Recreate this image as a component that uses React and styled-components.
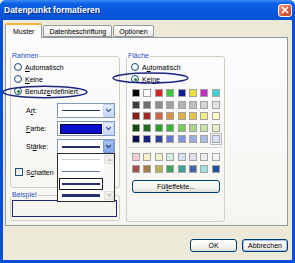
import React from 'react';
import styled, { createGlobalStyle } from 'styled-components';

const Global = createGlobalStyle`
  html, body { margin: 0; padding: 0; background: #ffffff; }
  body { font-family: "Liberation Sans", Arial, sans-serif; font-size: 7px; color: #000; }
`;

const Window = styled.div`
  position: relative;
  width: 295px;
  height: 263px;
  box-sizing: border-box;
  background: #0A4FD4;
  border-radius: 6px 6px 0 0;
  display: flex;
  flex-direction: column;
  overflow: hidden;
`;

const TitleBar = styled.div`
  height: 20px;
  flex: none;
  display: flex;
  align-items: center;
  padding: 0 3px 0 4px;
  background: linear-gradient(180deg, #3D8DF5 0%, #0C60E4 18%, #0656DC 60%, #0A52D2 100%);
`;

const Title = styled.div`
  flex: 1;
  color: #fff;
  font-weight: bold;
  font-size: 8.5px;
  text-shadow: 1px 1px 0 #0A2A80;
`;

const CloseBtn = styled.div`
  width: 14px;
  height: 13px;
  box-sizing: border-box;
  border: 1px solid #fff;
  border-radius: 3px;
  background: linear-gradient(135deg, #EE9A7E 0%, #DC5C3C 55%, #C8482C 100%);
  display: flex;
  align-items: center;
  justify-content: center;
`;

const Body = styled.div`
  flex: 1;
  margin: 0 3px 3px;
  background: #ECE9D8;
  padding: 3px 4px 0 2px;
  display: flex;
  flex-direction: column;
`;

const TabStrip = styled.div`
  display: flex;
  align-items: flex-end;
  height: 15px;
  margin-bottom: -1px;
  position: relative;
  z-index: 1;
`;

const Tab = styled.div`
  box-sizing: border-box;
  height: ${p => (p.$active ? 15 : 12)}px;
  margin-bottom: ${p => (p.$active ? 0 : 1)}px;
  margin-right: 1px;
  padding: 0 ${p => (p.$active ? 7 : 5)}px;
  display: flex;
  align-items: center;
  border: 1px solid #919B9C;
  border-bottom: ${p => (p.$active ? 'none' : '1px solid #919B9C')};
  border-top: ${p => (p.$active ? '2px solid #F5B43C' : '1px solid #919B9C')};
  border-radius: 2px 2px 0 0;
  background: ${p => (p.$active ? '#FCFCFE' : 'linear-gradient(180deg, #FFFFFF, #ECEBE6)')};
  white-space: nowrap;
`;

const Panel = styled.div`
  height: 189px;
  box-sizing: border-box;
  border: 1px solid #919B9C;
  background: linear-gradient(180deg, #FCFCFE 0%, #F6F5F0 100%);
  padding: 14px 4px 0 4px;
  display: flex;
  gap: 6px;
  align-items: flex-start;
`;

const Column = styled.div`
  display: flex;
  flex-direction: column;
  gap: 3px;
`;

const Group = styled.fieldset`
  margin: 0;
  padding: 0;
  min-width: 0;
  border: 1px solid #D0D0BF;
  border-radius: 3px;
  box-sizing: border-box;
  width: ${p => p.$w}px;
  height: ${p => p.$h}px;
`;

const Legend = styled.legend`
  padding: 0 1px;
  margin-left: 0;
  font-size: 7px;
  line-height: 8px;
  color: #1E4FC2;
`;

const GroupBody = styled.div`
  display: flex;
  flex-direction: column;
  padding: ${p => p.$pad};
`;

const RadioRow = styled.div`
  display: flex;
  align-items: center;
  gap: 3px;
  height: 12px;
`;

const RadioDot = styled.span`
  width: 8px;
  height: 8px;
  box-sizing: border-box;
  border-radius: 50%;
  border: 1px solid #1C5180;
  background: radial-gradient(circle at 40% 35%, #FFFFFF 30%, #DCD9CE 100%);
  display: flex;
  align-items: center;
  justify-content: center;
  &::after {
    content: '';
    width: 3px;
    height: 3px;
    border-radius: 50%;
    background: ${p => (p.$on ? '#2B7F2B' : 'transparent')};
  }
`;

const FieldList = styled.div`
  display: flex;
  flex-direction: column;
  gap: 3px;
  margin-top: 6px;
  padding-left: 15px;
`;

const FieldRow = styled.div`
  display: flex;
  align-items: center;
  height: 15px;
`;

const FieldLabel = styled.span`
  width: 31px;
`;

const Combo = styled.div`
  position: relative;
  width: 58px;
  height: 15px;
  box-sizing: border-box;
  border: 1px solid #7F9DB9;
  background: #fff;
  display: flex;
  align-items: center;
`;

const ComboValue = styled.div`
  flex: 1;
  display: flex;
  align-items: center;
  padding-left: ${p => p.$pad}px;
`;

const LineSample = styled.div`
  width: 38px;
  height: ${p => p.$w}px;
  background: ${p => p.$c || '#26306E'};
`;

const ColorSample = styled.div`
  width: 42px;
  height: 10px;
  box-sizing: border-box;
  border: 1px solid #000040;
  background: #0A10CC;
`;

const DropBtn = styled.div`
  width: 11px;
  height: 13px;
  box-sizing: border-box;
  border: 1px solid ${p => (p.$hot ? '#7C9EE4' : '#C4D4F6')};
  border-radius: 1px;
  background: ${p => (p.$hot
    ? 'linear-gradient(180deg, #A8C2F4, #86A6EA)'
    : 'linear-gradient(180deg, #E6EDFC, #C9D8F8)')};
  display: flex;
  align-items: center;
  justify-content: center;
`;

const DropList = styled.div`
  position: absolute;
  top: 100%;
  left: -1px;
  width: 58px;
  height: 49px;
  box-sizing: border-box;
  border: 1px solid #2A2A2A;
  background: #fff;
  display: flex;
  z-index: 2;
`;

const ListItems = styled.div`
  flex: 1;
  display: flex;
  flex-direction: column;
`;

const ListItem = styled.div`
  height: 12px;
  box-sizing: border-box;
  display: flex;
  align-items: center;
  padding-left: 4px;
  margin: ${p => (p.$sel ? '1px 1px 0 1px' : '0')};
  border: ${p => (p.$sel ? '1px solid #1A1A1A' : 'none')};
  padding-left: ${p => (p.$sel ? 2 : 4)}px;
`;

const ScrollBar = styled.div`
  width: 10px;
  background: #F6F6F4;
  display: flex;
  flex-direction: column;
  justify-content: space-between;
  padding: 1px 0;
`;

const ScrollArrow = styled.div`
  height: 9px;
  box-sizing: border-box;
  border: 1px solid #E0E0DC;
  background: #EFEFEC;
  display: flex;
  align-items: center;
  justify-content: center;
`;

const CheckRow = styled.div`
  display: flex;
  align-items: center;
  gap: 3px;
  height: 12px;
  margin-top: 12px;
  padding-left: 4px;
`;

const CheckBox = styled.span`
  width: 8px;
  height: 8px;
  box-sizing: border-box;
  border: 1px solid #1C5180;
  background: linear-gradient(135deg, #DCDBD4, #FFFFFF);
`;

const SampleBox = styled.div`
  height: 17px;
  box-sizing: border-box;
  margin: 1px 2px 0 1px;
  border: 1.5px solid #1F2778;
  background: #F6F5F0;
`;

const Palette = styled.div`
  display: grid;
  grid-template-columns: repeat(8, 8px);
  column-gap: 3.4px;
  row-gap: 3.5px;
  padding-left: 1px;
  margin-top: ${p => p.$top}px;
`;

const Swatch = styled.div`
  width: 8px;
  height: 8px;
  box-sizing: border-box;
  border: 1px solid #A4A4A0;
  background: ${p => p.$c};
  outline: ${p => (p.$hl ? '1px solid #B4BCCC' : 'none')};
  outline-offset: 1px;
`;

const Separator = styled.div`
  height: 1px;
  width: 95px;
  margin: 4px 0 4px -3px;
  background: #D6D5CC;
  border-bottom: 1px solid #FFFFFF;
`;

const XpButton = styled.div`
  width: ${p => p.$w}px;
  height: 13px;
  box-sizing: border-box;
  border: 1px solid #003C74;
  border-radius: 3px;
  background: linear-gradient(180deg, #FFFFFF 0%, #F3F2EE 60%, #E3E0D6 100%);
  box-shadow: ${p => (p.$focus ? 'inset 0 0 0 1px #A9C3F5' : 'none')};
  display: flex;
  align-items: center;
  justify-content: center;
  margin-left: ${p => p.$ml || 0}px;
  margin-top: ${p => p.$mt || 0}px;
`;

const ButtonRow = styled.div`
  display: flex;
  justify-content: flex-end;
  gap: 5px;
  margin-top: 13px;
`;

const Overlay = styled.svg`
  position: absolute;
  left: 0;
  top: 0;
  pointer-events: none;
  z-index: 5;
`;

const Chevron = ({ color }) => (
  <svg width="7" height="5" viewBox="0 0 7 5">
    <path d="M1 1 L3.5 3.5 L6 1" fill="none" stroke={color} strokeWidth="1.4" />
  </svg>
);

const Arrow = ({ up }) => (
  <svg width="5" height="3" viewBox="0 0 5 3">
    <path d={up ? 'M0 3 L2.5 0 L5 3 Z' : 'M0 0 L2.5 3 L5 0 Z'} fill="#C4C4C0" />
  </svg>
);

const colors = [
  ['#000000', '#FFFFFF', '#D02828', '#3CC83C', '#101C9C', '#E8E040', '#C030C0', '#40D0D0'],
  ['#3E3E3E', '#6E6E6E', '#8E8E8E', '#A2A2A2', '#B4B4B4', '#C2C2C2', '#D4D4D4', '#E4E4E4'],
  ['#8C1C1C', '#A62828', '#CE6444', '#D89444', '#E0B444', '#E8C44C', '#F0F088', '#F8F8C8'],
  ['#104C10', '#1C6C1C', '#28A028', '#3CB43C', '#7CC864', '#A4D888', '#C4E4A8', '#E0F0C8'],
  ['#0C0C50', '#14207C', '#2C40A0', '#6474D0', '#8494DC', '#98ACE0', '#A8BCE8', '#D4E0F4'],
];

const chartColors = [
  ['#F0D0D0', '#F8F0C8', '#EEF2CC', '#D4F0E4', '#D4E4F4', '#E4DCF0', '#ECECF0', '#F4F4F4'],
  ['#A05050', '#A87A48', '#B8B05C', '#40A060', '#40A0A0', '#4066A8', '#A0E0E0', '#2050A8'],
];

export default function App() {
  return (
    <Window>
      <Global />
      <TitleBar>
        <Title>Datenpunkt formatieren</Title>
        <CloseBtn>
          <svg width="8" height="8" viewBox="0 0 8 8">
            <path d="M1 1 L7 7 M7 1 L1 7" stroke="#fff" strokeWidth="1.6" />
          </svg>
        </CloseBtn>
      </TitleBar>
      <Body>
        <TabStrip>
          <Tab $active>Muster</Tab>
          <Tab>Datenbeschriftung</Tab>
          <Tab>Optionen</Tab>
        </TabStrip>
        <Panel>
          <Column>
            <Group $w={110} $h={136}>
              <Legend>Rahmen</Legend>
              <GroupBody $pad="1px 0 0 3px">
                <RadioRow><RadioDot /><span><u>A</u>utomatisch</span></RadioRow>
                <RadioRow><RadioDot /><span><u>K</u>eine</span></RadioRow>
                <RadioRow><RadioDot $on /><span>Benutz<u>e</u>rdefiniert</span></RadioRow>
              </GroupBody>
              <FieldList>
                <FieldRow>
                  <FieldLabel>A<u>r</u>t:</FieldLabel>
                  <Combo>
                    <ComboValue $pad={4}><LineSample $w={1} /></ComboValue>
                    <DropBtn><Chevron color="#4A66A8" /></DropBtn>
                  </Combo>
                </FieldRow>
                <FieldRow>
                  <FieldLabel><u>F</u>arbe:</FieldLabel>
                  <Combo>
                    <ComboValue $pad={2}><ColorSample /></ComboValue>
                    <DropBtn><Chevron color="#4A66A8" /></DropBtn>
                  </Combo>
                </FieldRow>
                <FieldRow>
                  <FieldLabel>St<u>ä</u>rke:</FieldLabel>
                  <Combo>
                    <ComboValue $pad={4}><LineSample $w={2} /></ComboValue>
                    <DropBtn $hot><Chevron color="#3A4F86" /></DropBtn>
                    <DropList>
                      <ListItems>
                        <ListItem><LineSample $w={1} $c="#D4CCDA" /></ListItem>
                        <ListItem><LineSample $w={1} $c="#6C78A8" /></ListItem>
                        <ListItem $sel><LineSample $w={2} /></ListItem>
                        <ListItem><LineSample $w={3} /></ListItem>
                      </ListItems>
                      <ScrollBar>
                        <ScrollArrow><Arrow up /></ScrollArrow>
                        <ScrollArrow><Arrow /></ScrollArrow>
                      </ScrollBar>
                    </DropList>
                  </Combo>
                </FieldRow>
              </FieldList>
              <CheckRow><CheckBox /><span>S<u>c</u>hatten</span></CheckRow>
            </Group>
            <Group $w={110} $h={30}>
              <Legend>Beispiel</Legend>
              <SampleBox />
            </Group>
          </Column>
          <Group $w={99} $h={170}>
            <Legend>Fläche</Legend>
            <GroupBody $pad="1px 0 0 4px">
              <RadioRow><RadioDot /><span>A<u>u</u>tomatisch</span></RadioRow>
              <RadioRow><RadioDot $on /><span>Kei<u>n</u>e</span></RadioRow>
              <Palette $top={4}>
                {colors.flat().map((c, i) => (
                  <Swatch key={i} $c={c} $hl={i === 39} />
                ))}
              </Palette>
              <Separator />
              <Palette $top={0}>
                {chartColors.flat().map((c, i) => (
                  <Swatch key={i} $c={c} />
                ))}
              </Palette>
              <XpButton $w={88} $ml={1} $mt={7}>Fül<u>l</u>effekte...</XpButton>
            </GroupBody>
          </Group>
        </Panel>
        <ButtonRow>
          <XpButton $w={47}>OK</XpButton>
          <XpButton $w={46} $focus>Abbrechen</XpButton>
        </ButtonRow>
      </Body>
      <Overlay width="295" height="263" viewBox="0 0 295 263">
        <ellipse cx="45" cy="92" rx="42" ry="5.8" fill="none" stroke="#1C2680" strokeWidth="1.5" />
        <ellipse cx="150.5" cy="78" rx="37.5" ry="5" fill="none" stroke="#1C2680" strokeWidth="1.5" />
      </Overlay>
    </Window>
  );
}
